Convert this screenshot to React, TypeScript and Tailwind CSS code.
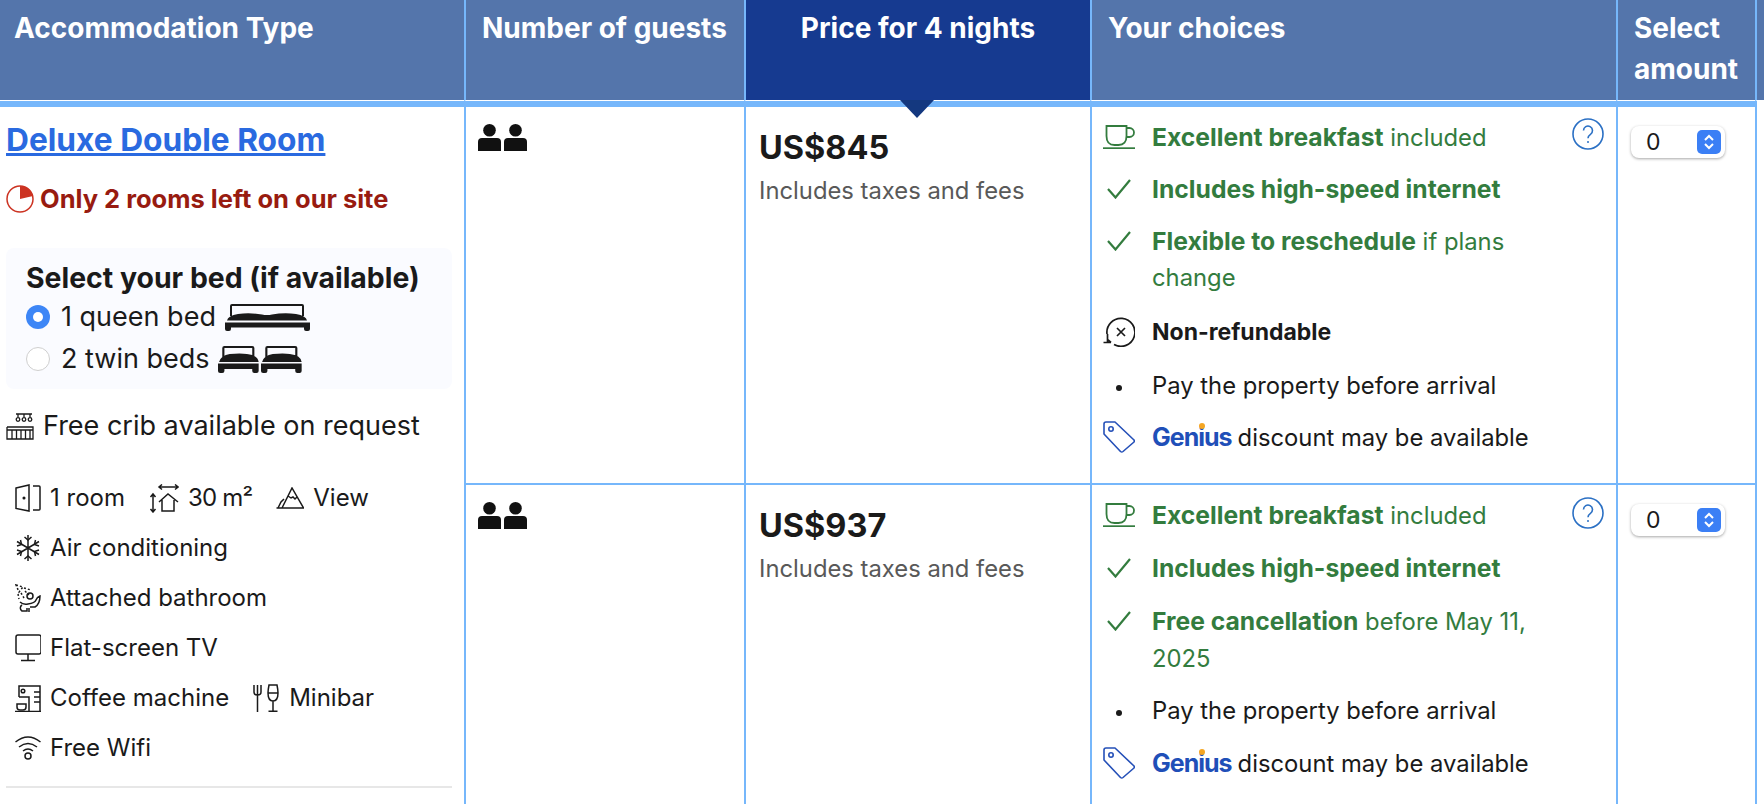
const sans = "font-['Inter','Noto_Sans',sans-serif] [font-optical-sizing:none]";

function PeopleIcon() {
  return (
    <svg width="49" height="27" viewBox="0 0 49 27" fill="#111" className="block">
      <circle cx="11.500" cy="6.300" r="6.300" />
      <path d="M0 27v-9q0-4 4-4h15q4 0 4 4v9z" />
      <circle cx="37.500" cy="6.300" r="6.300" />
      <path d="M26 27v-9q0-4 4-4h15q4 0 4 4v9z" />
    </svg>
  );
}

function CupIcon() {
  return (
    <svg width="32" height="24" viewBox="0 0 32 24" fill="none" stroke="#337c3e" strokeWidth="1.800">
      <path d="M3.500 1h20v10q0 9-8 9h-4q-8 0-8-9z" />
      <path d="M23.500 3h3a4 4 0 0 1 0 9h-3" />
      <path d="M0 23.200h32" />
    </svg>
  );
}

function CheckIcon() {
  return (
    <svg width="24" height="20" viewBox="0 0 24 20" fill="none" stroke="#337c3e" strokeWidth="2.200">
      <path d="M1 10l7.500 8.500L23 1" />
    </svg>
  );
}

function NonRefundIcon() {
  return (
    <svg width="32" height="30" viewBox="0 0 32 30" fill="none" stroke="#1a1a1a" strokeWidth="1.700">
      <path d="M4 17A14 14 0 1 1 11 27.500" />
      <path d="M4.500 17v8.500M0.500 25.500h7.500M8 25.500l-3.500-3" />
      <path d="M14 11l8 8M22 11l-8 8" />
    </svg>
  );
}

function TagIcon() {
  return (
    <svg width="32" height="32" viewBox="0 0 32 32" fill="none" stroke="#2550b8" strokeWidth="1.600" strokeLinejoin="round">
      <path d="M1 3a2 2 0 0 1 2-2h9l19 18a2 2 0 0 1 0 2L20 30.500a2 2 0 0 1-2.500 0L1 13z" />
      <circle cx="8" cy="8" r="2.200" />
    </svg>
  );
}

function GeniusWord() {
  return (
    <span className="relative inline-block text-[#1f4fb8] font-bold text-[25px] tracking-[-1px] mr-[6px]">
      Genius
      <span className="absolute left-[47px] top-[4px] w-[6px] h-[6px] rounded-full bg-[#f5a623]" />
    </span>
  );
}

function HelpIcon() {
  return (
    <svg width="32" height="32" viewBox="0 0 32 32" fill="none" stroke="#2b70c4" strokeWidth="1.600" className="block">
      <circle cx="16" cy="16" r="15" />
      <path d="M11.500 12.500a4.500 4.500 0 1 1 7 3.800c-1.600 1.100-2.500 2-2.500 4" />
      <circle cx="16" cy="24" r="1" fill="#2b70c4" stroke="none" />
    </svg>
  );
}

function QuantitySelect() {
  return (
    <div className="flex items-center justify-between w-[94px] h-[32px] bg-white rounded-lg shadow-[0_1px_3px_rgba(0,0,0,0.35)] pl-[15px] pr-[4px] text-[23px] text-[#1a1a1a]">
      <span>0</span>
      <span className="flex items-center justify-center w-[24px] h-[24px] rounded-[5px] bg-[#3b7ff5]">
        <svg width="12" height="18" viewBox="0 0 12 18" fill="none" stroke="#fff" strokeWidth="2">
          <path d="M2 7l4-4 4 4M2 11l4 4 4-4" />
        </svg>
      </span>
    </div>
  );
}

function QueenBedIcon() {
  return (
    <svg width="85" height="28" viewBox="0 0 85 28" fill="#1a1a1a">
      <path d="M5 13V3q0-2 2-2h70q2 0 2 2v10h-2V3H7V13z" />
      <path d="M2 17.500q1-5 11-6.500 12-1.500 24 0.500 5 1 10 0 12-2 24-0.500 10 1.500 11 6.500z" />
      <path d="M0 19.500h85v6.500q0 2-2 2h-2q-2 0-2-2v-1.500H6v1.500q0 2-2 2H2q-2 0-2-2z" />
    </svg>
  );
}

function TwinBedIcon() {
  const bed = "M4 13V3q0-2 2-2h26q2 0 2 2v10h-2V3H6V13zM1 17q2-7 10-8 10-1 16 0 10 1 11 8zM0 18.500h38v7.500q0 2-2 2h-2q-2 0-2-2v-2H6v2q0 2-2 2H2q-2 0-2-2z";
  return (
    <svg width="85" height="29" viewBox="0 0 85 29" fill="#1a1a1a">
      <path d={bed} transform="scale(1.070 1)" />
      <path d={bed} transform="translate(43 0) scale(1.070 1)" />
    </svg>
  );
}

function CribIcon() {
  return (
    <svg width="28" height="27" viewBox="0 0 28 27" fill="none" stroke="#1a1a1a" strokeWidth="1.300">
      <path d="M1 14v12h26V14h-26M1 17h26M6 17v9M10.500 17v9M15 17v9M19.500 17v9M24 17v9" />
      <path d="M10 1h16M12 1v3M18 1v3M24 1v3" />
      <circle cx="12" cy="6.500" r="1.800" />
      <circle cx="18" cy="6.500" r="1.800" />
      <circle cx="24" cy="6.500" r="1.800" />
    </svg>
  );
}

const facilityIcon = { width: 26, height: 28, fill: "none", stroke: "#1a1a1a", strokeWidth: 1.5 };

function DoorIcon() {
  return (
    <svg {...facilityIcon} viewBox="0 0 26 28">
      <path d="M1 4L14 1v26L1 24.500zM18 2h6q1 0 1 1v22q0 1-1 1h-6" />
      <circle cx="9" cy="14" r="0.800" fill="#1a1a1a" />
    </svg>
  );
}

function SizeIcon() {
  return (
    <svg width="30" height="29" viewBox="0 0 30 29" fill="none" stroke="#1a1a1a" strokeWidth="1.500">
      <path d="M10 3h19M13 0.500L10 3l3 2.500M26 0.500L29 3l-3 2.500" />
      <path d="M4 10v18M1.500 13L4 10l2.500 3M1.500 25L4 28l2.500-3" />
      <path d="M10 18l9-8 10 8M13 16v11h12V16" />
    </svg>
  );
}

function MountainIcon() {
  return (
    <svg width="28" height="22" viewBox="0 0 28 22" fill="none" stroke="#1a1a1a" strokeWidth="1.500">
      <path d="M0.500 21h27L16 1 6 21M8 12l-3 3-3 6" />
      <path d="M12 9l3 2 2-1 2 2 2-2" />
    </svg>
  );
}

function SnowIcon() {
  return (
    <svg {...facilityIcon} viewBox="0 0 26 28">
      <path d="M13 1v26M2 7.500l22 13M24 7.500l-22 13" />
      <path d="M9.500 3l3.500 3 3.500-3M9.500 25l3.500-3 3.500 3M2 12l4.500-1.500L5.500 6M24 12l-4.500-1.500 1-4.500M2 16l4.500 1.500L5.500 22M24 16l-4.500 1.500 1 4.500" />
    </svg>
  );
}

function BathIcon() {
  return (
    <svg {...facilityIcon} viewBox="0 0 26 28">
      <path d="M1 1l7 2-4 5zM9 4l7 2M6 9l3 5M3 10l1 5M10 7l4 4" strokeDasharray="2 2" />
      <circle cx="15" cy="12" r="3" />
      <path d="M5 18q3 3 8 2 7-1 8-4 1-3 4-4 0 8-5 11h-5M7 21a3.500 3.500 0 0 0 0 6h5v-3M14 28v-4" />
    </svg>
  );
}

function TvIcon() {
  return (
    <svg {...facilityIcon} viewBox="0 0 26 28">
      <rect x="1" y="1" width="25" height="19" rx="2" />
      <path d="M13 20v6M6 26.500h14" />
    </svg>
  );
}

function CoffeeIcon() {
  return (
    <svg {...facilityIcon} viewBox="0 0 26 28">
      <path d="M4 13V2h21v25M4 13h10v14M19 8h6M19 13h6M19 18h6M0 27.500h26" />
      <circle cx="8" cy="7" r="1.800" />
      <path d="M2 20h9v3q0 3-3 3H5q-3 0-3-3z" />
    </svg>
  );
}

function MinibarIcon() {
  return (
    <svg width="27" height="28" viewBox="0 0 27 28" fill="none" stroke="#1a1a1a" strokeWidth="1.500">
      <path d="M1 1v7q0 3 3.500 3T8 8V1M4.500 1v27" />
      <path d="M16 1h8q1 5 1 8 0 8-5 8t-5-8q0-3 1-8zM15 9h10M20 17v10M15.500 27.300h9" />
    </svg>
  );
}

function WifiIcon() {
  return (
    <svg {...facilityIcon} viewBox="0 0 26 28">
      <path d="M0.500 8q12.500-10 25 0M4 13q9-7 18 0M8 17q5-4 10 0" />
      <circle cx="13" cy="22" r="3" />
    </svg>
  );
}

function Facility({ icon, label, className = "" }: { icon: React.ReactNode; label: string; className?: string }) {
  return (
    <span className="flex items-center gap-[9px] whitespace-nowrap">
      {icon}
      <span className={className}>{label}</span>
    </span>
  );
}

function Radio({ checked }: { checked?: boolean }) {
  return checked ? (
    <span className="flex items-center justify-center w-[24px] h-[24px] rounded-full bg-[#3d86f6]">
      <span className="w-[10px] h-[10px] rounded-full bg-white" />
    </span>
  ) : (
    <span className="w-[24px] h-[24px] rounded-full bg-white border border-[#cfcfcf]" />
  );
}

function Choice({ icon, children, className = "" }: { icon: React.ReactNode; children: React.ReactNode; className?: string }) {
  return (
    <li className={`flex items-start ${className}`}>
      <span className="flex justify-center items-center w-[32px] h-[36px] shrink-0 mr-[17px]">{icon}</span>
      <span>{children}</span>
    </li>
  );
}

function Bold({ children }: { children: React.ReactNode }) {
  return <b className="font-bold text-[24.700px]">{children}</b>;
}

function PriceBlock({ price }: { price: string }) {
  return (
    <>
      <div className="text-[32.500px] leading-[36px] font-bold text-[#1a1a1a]">{price}</div>
      <div className="text-[23.800px] leading-[30px] mt-[10px] text-[#595959]">Includes taxes and fees</div>
    </>
  );
}

function Bullet() {
  return <span className="w-[6px] h-[6px] rounded-full bg-[#1a1a1a] mt-[4px]" />;
}

const headCell = "h-[101px] align-top bg-[#5475ab] border-b border-white pt-[8px] font-bold";
const divider = "border-l-2 border-l-[#76b7fb]";

export default function App() {
  return (
    <div className={`h-[804px] w-[1764px] overflow-hidden bg-white text-[#1a1a1a] ${sans}`}>
      <table className="table-fixed w-[1764px] border-separate border-spacing-0">
        <colgroup>
          <col className="w-[464px]" />
          <col className="w-[280px]" />
          <col className="w-[346px]" />
          <col className="w-[526px]" />
          <col className="w-[139px]" />
          <col className="w-[9px]" />
        </colgroup>
        <thead>
          <tr className="text-white text-[28px] leading-[41px] text-left">
            <th className={`${headCell} pl-[14px]`}>Accommodation Type</th>
            <th className={`${headCell} ${divider} pl-[16px]`}>Number of guests</th>
            <th className={`${headCell} ${divider} !bg-[#163a90] text-center`}>Price for 4 nights</th>
            <th className={`${headCell} ${divider} pl-[16px]`}>Your choices</th>
            <th className={`${headCell} ${divider} pl-[16px]`}>Select amount</th>
            <th className={`${headCell} ${divider}`} />
          </tr>
        </thead>
        <tbody>
          <tr className="h-[384px]">
            <td rowSpan={2} className="align-top border-t-[6px] border-[#76b7fb] pl-[6px] pr-[12px]">
              <a className="block mt-[15px] text-[31.700px] leading-[36px] font-bold text-[#2a6ae0] underline">Deluxe Double Room</a>
              <div className="flex items-center gap-[6px] mt-[26px] text-[#981b10] font-bold text-[25.500px] leading-[30px]">
                <svg width="28" height="28" viewBox="0 0 28 28">
                  <circle cx="14" cy="14" r="13" fill="#fff" stroke="#cc3322" strokeWidth="1.500" />
                  <path d="M14 14V1a13 13 0 0 1 13 10z" fill="#cc3322" />
                </svg>
                Only 2 rooms left on our site
              </div>
              <div className="mt-[34px] h-[141px] rounded-lg bg-[#fafbff] pl-[20px] pt-[13px] text-[27px] leading-[34px]">
                <div className="font-bold text-[28.400px]">Select your bed (if available)</div>
                <div className="flex items-center gap-[11px] h-[42px] mt-[1px]">
                  <Radio checked />
                  <span className="mr-[-2px]">1 queen bed</span>
                  <QueenBedIcon />
                </div>
                <div className="flex items-center gap-[8px] h-[42px]">
                  <Radio />
                  <span className="ml-[3px]">2 twin beds</span>
                  <TwinBedIcon />
                </div>
              </div>
              <div className="flex items-center gap-[9px] mt-[19px] text-[27px] leading-[36px]">
                <CribIcon />
                Free crib available on request
              </div>
              <div className="mt-[29px] pl-[9px] text-[24px] leading-[50px]">
                <div className="flex gap-[24px] h-[50px]">
                  <Facility icon={<DoorIcon />} label="1 room" />
                  <Facility icon={<SizeIcon />} label="30 m²" className="tracking-[-0.8px]" />
                  <Facility icon={<MountainIcon />} label="View" />
                </div>
                <div className="flex h-[50px]"><Facility icon={<SnowIcon />} label="Air conditioning" /></div>
                <div className="flex h-[50px]"><Facility icon={<BathIcon />} label="Attached bathroom" /></div>
                <div className="flex h-[50px]"><Facility icon={<TvIcon />} label="Flat-screen TV" /></div>
                <div className="flex gap-[24px] h-[50px]">
                  <Facility icon={<CoffeeIcon />} label="Coffee machine" />
                  <Facility icon={<MinibarIcon />} label="Minibar" />
                </div>
                <div className="flex h-[50px]"><Facility icon={<WifiIcon />} label="Free Wifi" /></div>
              </div>
              <hr className="mt-[13px] border-t-2 border-[#e7e7e7]" />
            </td>
            <td className="align-top border-t-[6px] border-b-2 border-l-2 border-[#76b7fb] pl-[12px] pt-[17px]"><PeopleIcon /></td>
            <td className="relative align-top border-t-[6px] border-b-2 border-l-2 border-[#76b7fb] pl-[13px] pt-[23px]">
              <span className="absolute left-[154px] -top-[7px] w-0 h-0 border-x-[17px] border-x-transparent border-t-[18px] border-t-[#14387f]" />
              <PriceBlock price="US$845" />
            </td>
            <td className="relative align-top border-t-[6px] border-b-2 border-l-2 border-[#76b7fb] pl-[11px] pr-[52px] pt-[12px] text-[23.800px] leading-[36px] text-[#337c3e]">
              <span className="absolute right-[12px] top-[11px]"><HelpIcon /></span>
              <ul>
                <Choice icon={<CupIcon />} className="mb-[15px]"><Bold>Excellent breakfast</Bold> included</Choice>
                <Choice icon={<CheckIcon />} className="mb-[15px]"><Bold>Includes high-speed internet</Bold></Choice>
                <Choice icon={<CheckIcon />} className="mb-[18px]"><Bold>Flexible to reschedule</Bold> if plans change</Choice>
                <Choice icon={<NonRefundIcon />} className="mb-[18px] text-[#1a1a1a]"><b className="font-bold text-[23px]">Non-refundable</b></Choice>
                <Choice icon={<Bullet />} className="mb-[15px] text-[#1a1a1a]">Pay the property before arrival</Choice>
                <Choice icon={<TagIcon />} className="text-[#1a1a1a] whitespace-nowrap"><GeniusWord />discount may be available</Choice>
              </ul>
            </td>
            <td className="align-top border-t-[6px] border-b-2 border-l-2 border-[#76b7fb] pl-[13px] pt-[19px]"><QuantitySelect /></td>
            <td className="align-top border-l-2 border-[#76b7fb]" />
          </tr>
          <tr className="h-[400px]">
            <td className="align-top border-l-2 border-[#76b7fb] pl-[12px] pt-[17px]"><PeopleIcon /></td>
            <td className="align-top border-l-2 border-[#76b7fb] pl-[13px] pt-[23px]"><PriceBlock price="US$937" /></td>
            <td className="relative align-top border-l-2 border-[#76b7fb] pl-[11px] pr-[52px] pt-[12px] text-[23.800px] leading-[36px] text-[#337c3e]">
              <span className="absolute right-[12px] top-[12px]"><HelpIcon /></span>
              <ul>
                <Choice icon={<CupIcon />} className="mb-[16px]"><Bold>Excellent breakfast</Bold> included</Choice>
                <Choice icon={<CheckIcon />} className="mb-[16px]"><Bold>Includes high-speed internet</Bold></Choice>
                <Choice icon={<CheckIcon />} className="mb-[16px] leading-[37px]"><Bold>Free cancellation</Bold> before May 11, 2025</Choice>
                <Choice icon={<Bullet />} className="mb-[16px] text-[#1a1a1a]">Pay the property before arrival</Choice>
                <Choice icon={<TagIcon />} className="text-[#1a1a1a] whitespace-nowrap"><GeniusWord />discount may be available</Choice>
              </ul>
            </td>
            <td className="align-top border-l-2 border-[#76b7fb] pl-[13px] pt-[19px]"><QuantitySelect /></td>
            <td className="align-top border-l-2 border-[#76b7fb]" />
          </tr>
        </tbody>
      </table>
    </div>
  );
}
